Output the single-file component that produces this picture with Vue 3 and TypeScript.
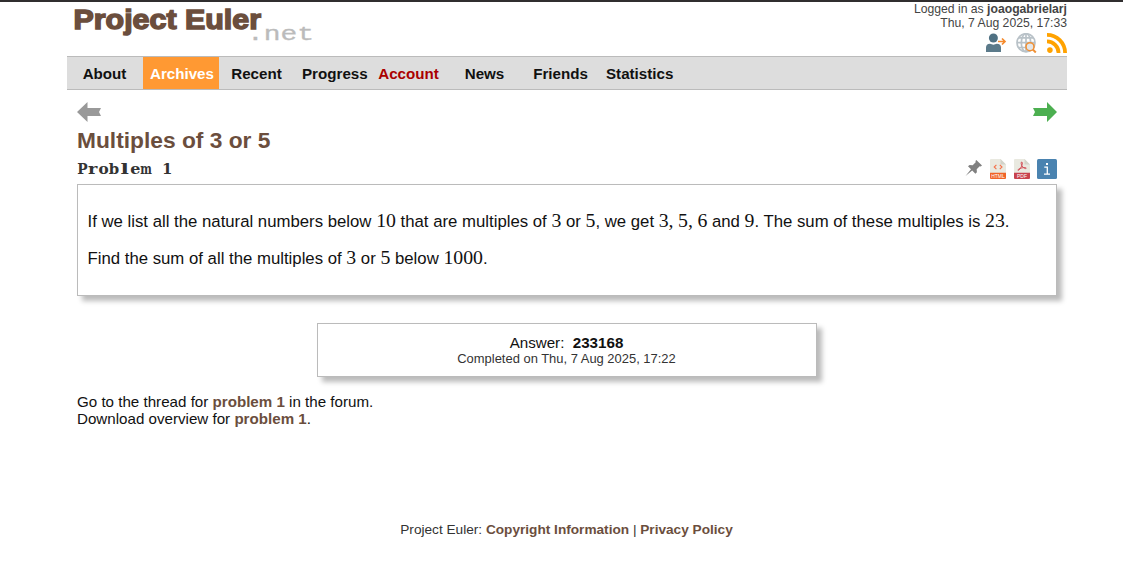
<script setup lang="ts">
interface NavItem {
  label: string
  kind?: 'active' | 'alert'
}

interface Glyph {
  char: string
  x: number
  width: number
}

const navItems: NavItem[] = [
  { label: 'About' },
  { label: 'Archives', kind: 'active' },
  { label: 'Recent' },
  { label: 'Progress' },
  { label: 'Account', kind: 'alert' },
  { label: 'News' },
  { label: 'Friends' },
  { label: 'Statistics' },
]

const problemGlyphs: Glyph[] = [
  { char: 'P', x: 0.2, width: 10.4 },
  { char: 'r', x: 11, width: 9.4 },
  { char: 'o', x: 21.4, width: 10.2 },
  { char: 'b', x: 31.8, width: 10.4 },
  { char: 'l', x: 43.6, width: 8.4 },
  { char: 'e', x: 53.2, width: 10.2 },
  { char: 'm', x: 63.2, width: 11.6 },
  { char: '1', x: 85, width: 10.4 },
]
</script>

<template>
  <div class="page">
    <div class="container">
      <header class="header">
        <svg class="logo" width="250" height="44" viewBox="0 0 250 44">
          <text class="logo-name" x="6.500" y="26.500" textLength="187.500" lengthAdjust="spacingAndGlyphs">Project Euler</text>
          <text class="logo-net" x="180" y="37.500" textLength="67" lengthAdjust="spacingAndGlyphs">.net</text>
        </svg>
        <div class="session">
          <div>Logged in as <b>joaogabrielarj</b></div>
          <div>Thu, 7 Aug 2025, 17:33</div>
          <div class="session-icons">
            <svg width="22" height="20" viewBox="0 0 22 20">
              <circle cx="8.4" cy="5" r="4.500" fill="#4f7183" />
              <path d="M1 19v-4.500q0-3.500 4-3.700l3.400.9 3.400-.9q4.200.2 4.200 3.700V19z" fill="#5b7a8a" />
              <path d="M13 8.500h6.500M17 5.500l3 3-3 3" fill="none" stroke="#f58a2c" stroke-width="1.700" />
            </svg>
            <svg width="22" height="20" viewBox="0 0 22 20">
              <g fill="none" stroke="#b9c2c8" stroke-width="1.700">
                <circle cx="10" cy="9.700" r="9" />
                <ellipse cx="10" cy="9.700" rx="4.700" ry="9" />
                <path d="M10 .7v18M1 9.700h18M2.500 4.900h15M2.500 14.500h15" />
              </g>
              <circle cx="14" cy="13.700" r="4" fill="#e3e6e8" stroke="#f09035" stroke-width="1.600" />
              <path d="M16.800 16.500l3 3" stroke="#f09035" stroke-width="2" />
            </svg>
            <svg width="20" height="20" viewBox="0 0 20 20">
              <circle cx="2.900" cy="17.100" r="2.800" fill="#ffa200" />
              <path d="M0 8.400A11.600 11.600 0 0 1 11.600 20M0 1.900A18.100 18.100 0 0 1 18.100 20" fill="none" stroke="#ffa200" stroke-width="3.800" />
            </svg>
          </div>
        </div>
      </header>

      <nav class="nav">
        <a v-for="item in navItems" :key="item.label" class="nav-item" :class="item.kind">{{ item.label }}</a>
      </nav>

      <main class="content">
        <div class="pager">
          <svg width="24" height="20" viewBox="0 0 24 20">
            <path d="M0 10L10.500 0v6H24l-2 4 2 4H10.500v6z" fill="#999" />
          </svg>
          <svg width="24" height="20" viewBox="0 0 24 20">
            <path d="M24 10L14 0v6H0l2 4-2 4h14v6z" fill="#4caf50" />
          </svg>
        </div>
        <h2 class="title">Multiples of 3 or 5</h2>
        <div class="subhead">
          <svg class="problem-label" width="110" height="20" viewBox="0 0 110 20">
            <text aria-label="Problem 1"><tspan v-for="g in problemGlyphs" :key="g.char" :x="g.x" y="15" :textLength="g.width" lengthAdjust="spacingAndGlyphs">{{ g.char }}</tspan></text>
          </svg>
          <div class="tools">
            <svg width="18" height="18" viewBox="0 0 18 18">
              <path d="M12.300 1l5.700 5.600-1.300.9-1-.2-3 2.900.2 3.100-1.500 1.400-3.200-3.200L1.500 17l5.500-6.700-3-3.100 1.600-1.300 3.100.3 3-2.900-.2-1.200z" fill="#808080" />
            </svg>
            <svg width="16" height="20" viewBox="0 0 16 20">
              <path d="M0 1q0-1 1-1h9.500L16 5.500V14H0z" fill="#e9e9e0" />
              <path d="M10.500 0L16 5.500h-5.500z" fill="#d3d3c9" />
              <path d="M6.400 5.800L4.200 8l2.200 2.200M9.800 5.800L12 8l-2.200 2.200" fill="none" stroke="#f4724a" stroke-width="1.100" />
              <path d="M0 13.700h16V19q0 1-1 1H1q-1 0-1-1z" fill="#f06428" />
              <text x="1.300" y="18.800" class="file-type" textLength="13.400" lengthAdjust="spacingAndGlyphs">HTML</text>
            </svg>
            <svg width="16" height="20" viewBox="0 0 16 20">
              <path d="M0 1q0-1 1-1h9.500L16 5.500V14H0z" fill="#e9e9e0" />
              <path d="M10.500 0L16 5.500h-5.500z" fill="#d3d3c9" />
              <path d="M7.500 3q1.200-.1.800 2-.5 3-3.300 6-.8.700-1.100.2-.3-1 3.100-2.100 3.200-.9 4.900-.3.800.5-.2.800Q9.300 9.500 7.600 6.300 6.600 3.500 7.500 3z" fill="none" stroke="#d04b54" stroke-width=".9" />
              <path d="M0 13.700h16V19q0 1-1 1H1q-1 0-1-1z" fill="#c8424d" />
              <text x="3" y="18.800" class="file-type" textLength="10" lengthAdjust="spacingAndGlyphs">PDF</text>
            </svg>
            <svg class="info" width="20" height="20" viewBox="0 0 20 20">
              <rect width="20" height="20" rx="1.500" fill="#4a83b0" />
              <path d="M9 4h2v2H9z" fill="#fff" />
              <path d="M7.300 8.200h3v6.700M7 15.200h6" fill="none" stroke="#fff" stroke-width="1.300" />
            </svg>
          </div>
        </div>

        <section class="panel problem">
          <p>If we list all the natural numbers below <span class="math">10</span> that are multiples of <span class="math">3</span> or <span class="math">5</span>, we get <span class="math list">3,</span><span class="math list">5,</span><span class="math">6</span> and <span class="math">9</span>. The sum of these multiples is <span class="math">23</span>.</p>
          <p>Find the sum of all the multiples of <span class="math">3</span> or <span class="math">5</span> below <span class="math">1000</span>.</p>
        </section>

        <section class="panel answer">
          <div class="answer-value">Answer:&nbsp; <b>233168</b></div>
          <div class="answer-date">Completed on Thu, 7 Aug 2025, 17:22</div>
        </section>

        <div class="links">
          <div>Go to the thread for <a>problem 1</a> in the forum.</div>
          <div>Download overview for <a>problem 1</a>.</div>
        </div>
      </main>

      <footer class="footer">Project Euler: <a>Copyright Information</a> | <a>Privacy Policy</a></footer>
    </div>
  </div>
</template>

<style>
body {
  margin: 0;
  background: #fff;
}
</style>

<style scoped>
.page {
  box-sizing: border-box;
  height: 576px;
  overflow: hidden;
  border-top: 2px solid #302e2f;
  font-family: "Liberation Sans", Arial, sans-serif;
  font-size: 15.150px;
  color: #111;
}
.container {
  width: 1000px;
  margin-left: 67px;
}
.header {
  display: flex;
  justify-content: space-between;
  height: 54px;
}
.logo-name {
  font: bold 28.500px "Liberation Sans", Arial, sans-serif;
  fill: #6b4e3d;
  stroke: #6b4e3d;
  stroke-width: 1.500px;
}
.logo-net {
  font: 21px "Liberation Mono", monospace;
  fill: #bbb;
  stroke: #bbb;
  stroke-width: 0.300px;
}
.session {
  font-size: 12.200px;
  line-height: 14px;
  text-align: right;
  color: #444;
}
.session-icons {
  display: flex;
  justify-content: flex-end;
  gap: 9px;
  margin-top: 3px;
}
.nav {
  display: flex;
  box-sizing: border-box;
  height: 34px;
  border-top: 1px solid #bbb;
  border-bottom: 1px solid #bbb;
  background: #ddd;
}
.nav-item {
  box-sizing: border-box;
  width: 76px;
  padding: 0 8px 0 7px;
  line-height: 33px;
  font-weight: bold;
  text-align: center;
  white-space: nowrap;
}
.nav-item.active {
  background: #ff9933;
  color: #fff;
}
.nav-item.alert {
  color: #a00;
}
.content {
  padding: 12px 10px 0;
}
.pager {
  display: flex;
  justify-content: space-between;
  height: 20px;
}
.title {
  margin: 5px 0 0;
  font-size: 22.750px;
  line-height: 27px;
  color: #6b4e3d;
}
.subhead {
  display: flex;
  justify-content: space-between;
  height: 20px;
  margin-top: 5px;
}
.problem-label text {
  font: bold 14px "DejaVu Serif", serif;
  fill: #333;
}
.tools {
  display: flex;
  gap: 8px;
}
.tools .info {
  margin-left: -1px;
}
.file-type {
  font: 4.800px "Liberation Sans", sans-serif;
  fill: #fff;
}
.panel {
  box-sizing: border-box;
  border: 1px solid #bbb;
  background: #fff;
  box-shadow: 5px 5px 5px #bbb;
}
.problem {
  width: 980px;
  height: 112px;
  margin-top: 5px;
  padding: 25px 9.500px 0;
  font-size: 16.750px;
}
.problem p {
  margin: 0 0 13px;
  line-height: 24px;
  white-space: nowrap;
}
.math {
  font-family: "Liberation Serif", serif;
  font-size: 19.800px;
  line-height: 1;
}
.math.list {
  margin-right: 4.500px;
}
.answer {
  width: 500px;
  height: 54px;
  margin: 27px 0 0 240px;
  padding: 10px 1px 0 0;
  text-align: center;
}
.answer-value {
  line-height: 17px;
}
.answer-date {
  font-size: 12.950px;
  line-height: 15px;
  color: #333;
}
.links {
  margin-top: 16px;
  line-height: 17px;
}
a {
  font-weight: bold;
}
.links a,
.footer a {
  color: #6b4e3d;
}
.footer {
  margin-top: 95px;
  padding-right: 1px;
  font-size: 13.650px;
  line-height: 16px;
  text-align: center;
  color: #333;
}
</style>
